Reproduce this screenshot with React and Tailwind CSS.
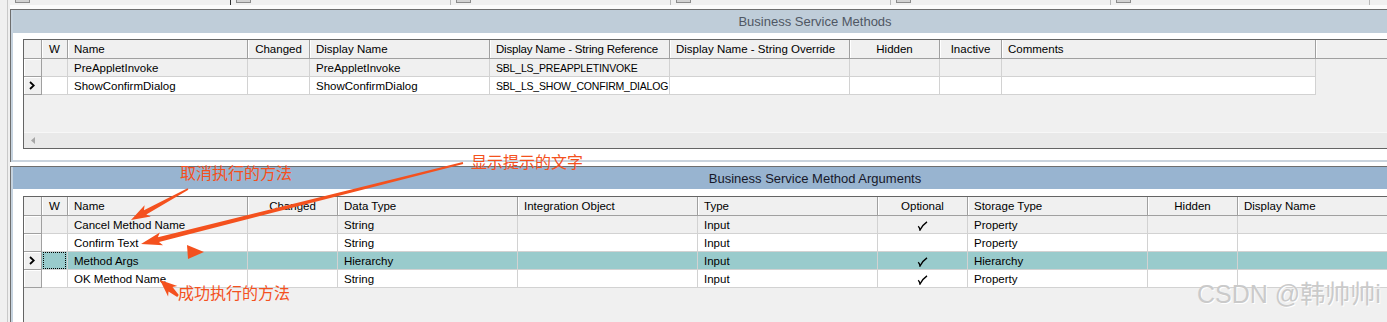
import React from "react"

const methodCols = [
    { label: "W", w: "w-[26px]", center: true },
    { label: "Name", w: "w-[180px]" },
    { label: "Changed", w: "w-[62px]", center: true },
    { label: "Display Name", w: "w-[180px]" },
    { label: "Display Name - String Reference", w: "w-[180px]", tight: true },
    { label: "Display Name - String Override", w: "w-[180px]" },
    { label: "Hidden", w: "w-[90px]", center: true },
    { label: "Inactive", w: "w-[62px]", center: true },
    { label: "Comments", w: "w-[314px]" },
]

const methodRows = [
    ["", "PreAppletInvoke", "", "PreAppletInvoke", "SBL_LS_PREAPPLETINVOKE", "", "", "", ""],
    ["", "ShowConfirmDialog", "", "ShowConfirmDialog", "SBL_LS_SHOW_CONFIRM_DIALOG", "", "", "", ""],
]

const argCols = [
    { label: "W", w: "w-[26px]", center: true },
    { label: "Name", w: "w-[180px]" },
    { label: "Changed", w: "w-[90px]", center: true },
    { label: "Data Type", w: "w-[180px]" },
    { label: "Integration Object", w: "w-[180px]" },
    { label: "Type", w: "w-[180px]" },
    { label: "Optional", w: "w-[90px]", center: true },
    { label: "Storage Type", w: "w-[180px]" },
    { label: "Hidden", w: "w-[90px]", center: true },
    { label: "Display Name", w: "w-[180px]" },
]

const CHECK = "__check__"

const argRows = [
    ["", "Cancel Method Name", "", "String", "", "Input", CHECK, "Property", "", ""],
    ["", "Confirm Text", "", "String", "", "Input", "", "Property", "", ""],
    ["", "Method Args", "", "Hierarchy", "", "Input", CHECK, "Hierarchy", "", ""],
    ["", "OK Method Name", "", "String", "", "Input", CHECK, "Property", "", ""],
]

const Chevron = () => (
    <svg width="6" height="9" viewBox="0 0 6 9">
        <path d="M1 1 L4.8 4.5 L1 8" fill="none" stroke="#000" strokeWidth="1.8" />
    </svg>
)

const Check = () => (
    <svg width="11" height="10" viewBox="0 0 11 10">
        <path d="M1.2 5.2 Q2.6 6.4 3 9 Q5.5 3.8 10 0.8" fill="none" stroke="#000" strokeWidth="1.4" />
    </svg>
)

const HeaderRow = ({ cols }) => (
    <div className="flex h-[19px] shrink-0 bg-[#f0f0f0] border-b border-[#a0a0a0]">
        <div className="w-[18px] shrink-0 border-r border-[#a0a0a0]" />
        {cols.map((c) => (
            <div
                key={c.label}
                className={`${c.w} shrink-0 border-r border-[#a0a0a0] shadow-[inset_1px_0_0_#ffffff] flex items-center px-[6px] pt-[2px] whitespace-nowrap overflow-hidden ${c.center ? "justify-center" : ""} ${c.tight ? "tracking-[-0.2px]" : ""}`}
            >
                {c.label}
            </div>
        ))}
        <div className="flex-1 shadow-[inset_1px_0_0_#ffffff]" />
    </div>
)

const BodyRow = ({ cols, cells, bg, current, focus }) => (
    <div className="flex w-max h-[18px] shrink-0">
        <div className="w-[18px] shrink-0 bg-[#f0f0f0] border-r border-b border-[#a0a0a0] shadow-[inset_1px_1px_0_#ffffff] flex items-center pl-[5px]">
            {current && <Chevron />}
        </div>
        {cols.map((c, i) => (
            <div
                key={c.label}
                className={`${c.w} shrink-0 ${bg} border-r border-b border-[#d2d2d2] flex items-center px-[6px] pt-[2px] whitespace-nowrap overflow-hidden ${c.center ? "justify-center" : ""} ${c.tight ? "text-[10.5px] tracking-[-0.2px]" : ""}`}
            >
                {focus && i === 0 ? (
                    <div className="-mx-[5px] -mt-[2px] w-[25px] h-[17px] border border-dotted border-black" />
                ) : cells[i] === CHECK ? (
                    <Check />
                ) : (
                    cells[i]
                )}
            </div>
        ))}
    </div>
)

const Scrollbar = () => (
    <div className="h-[16px] shrink-0 bg-[#e9e9e9] border-t border-[#f7f7f7] flex items-center pl-[7px]">
        <svg width="4" height="7" viewBox="0 0 4 7">
            <path d="M4 0 L0 3.5 L4 7 Z" fill="#a6a6a6" />
        </svg>
    </div>
)

const TitleBar = ({ title, active }) => (
    <div
        className={`flex shrink-0 overflow-hidden ${active ? "h-[22px] pt-[2px] bg-[#98b4d0] text-[#16182a]" : "h-[23px] bg-[#bfcdd9] text-[#4f5764]"}`}
    >
        <div className="w-[1604px] shrink-0 flex items-center justify-center text-[13px]">{title}</div>
    </div>
)

// tapered arrow like the screenshot tool draws
const arrow = (x1, y1, x2, y2, head = 16, width = 13, neck = 2.5, tail = 0.8) => {
    const dx = x2 - x1
    const dy = y2 - y1
    const len = Math.hypot(dx, dy)
    const ux = dx / len
    const uy = dy / len
    const nx = -uy
    const ny = ux
    const bx = x2 - ux * head
    const by = y2 - uy * head
    const hx = bx - ux * 3
    const hy = by - uy * 3
    const p = [
        [x1 + nx * tail, y1 + ny * tail],
        [bx + nx * neck, by + ny * neck],
        [hx + (nx * width) / 2, hy + (ny * width) / 2],
        [x2, y2],
        [hx - (nx * width) / 2, hy - (ny * width) / 2],
        [bx - nx * neck, by - ny * neck],
        [x1 - nx * tail, y1 - ny * tail],
    ]
    return p.map((q) => q.map((v) => v.toFixed(1)).join(",")).join(" ")
}

const tabs = [221, 221, 220, 221, 220, 259]

const App = () => {
    return (
        <div className="w-[1387px] h-[322px] overflow-hidden relative flex bg-[#f0f0f0] text-[11.5px] text-black font-['Liberation_Sans','Noto_Sans_CJK_SC',sans-serif]">
            {/* left gutter */}
            <div className="w-[10px] shrink-0 flex">
                <div className="ml-[7px] w-px bg-[#c9c9c9]" />
            </div>

            <div className="flex-1 min-w-0 flex flex-col">
                {/* cut-off tab strip */}
                <div className="h-[9px] shrink-0 flex flex-col">
                    <div className="h-[5px] flex">
                        {tabs.map((w, i) => (
                            <div
                                key={i}
                                className={`shrink-0 flex border-r ${i === 0 ? "w-[221px] border-[#303030]" : i === 5 ? "w-[259px] border-[#b8b8b8]" : "w-[220px] border-[#b8b8b8]"}`}
                            >
                                <div className="ml-[5px] w-[15px] h-[3px] bg-[#d2d2d2] border-x border-b border-[#8c8c8c]" />
                            </div>
                        ))}
                    </div>
                    <div className="flex-1 bg-[#fbfbfb]" />
                </div>

                {/* Business Service Methods */}
                <div className="h-[153px] shrink-0 flex border-l border-t border-[#6e6e6e]">
                    <div className="flex-1 min-w-0 flex flex-col border-l-2 border-[#c6d3df] bg-white">
                        <TitleBar title="Business Service Methods" />
                        <div className="flex-1 flex flex-col pl-[10px] pt-[6px]">
                            <div className="h-[110px] shrink-0 flex flex-col bg-[#f0f0f0] border-l border-t border-b border-[#646464]">
                                <HeaderRow cols={methodCols} />
                                <BodyRow cols={methodCols} cells={methodRows[0]} bg="bg-[#f0f0f0]" />
                                <BodyRow cols={methodCols} cells={methodRows[1]} bg="bg-white" current />
                                <div className="flex-1" />
                                <Scrollbar />
                            </div>
                            <div className="flex-1" />
                        </div>
                        <div className="h-[2px] shrink-0 bg-[#c9d3dd]" />
                    </div>
                </div>

                <div className="h-[4px] shrink-0 bg-white" />

                {/* Business Service Method Arguments */}
                <div className="flex-1 min-h-0 flex border-l border-t border-[#6e6e6e]">
                    <div className="flex-1 min-w-0 flex flex-col border-l-2 border-[#c6d3df] bg-white">
                        <TitleBar title="Business Service Method Arguments" active />
                        <div className="flex-1 min-h-0 flex flex-col pl-[10px] pt-[7px]">
                            <div className="flex-1 flex flex-col bg-[#f0f0f0] border-l border-t border-[#646464]">
                                <HeaderRow cols={argCols} />
                                <BodyRow cols={argCols} cells={argRows[0]} bg="bg-[#f0f0f0]" />
                                <BodyRow cols={argCols} cells={argRows[1]} bg="bg-white" />
                                <BodyRow cols={argCols} cells={argRows[2]} bg="bg-[#99cbcc]" current focus />
                                <BodyRow cols={argCols} cells={argRows[3]} bg="bg-white" />
                            </div>
                        </div>
                    </div>
                </div>
            </div>

            {/* annotations drawn on top of the screenshot */}
            <svg className="absolute inset-0 pointer-events-none" width="1387" height="322">
                <g fill="#f4511e">
                    <polygon points={arrow(188, 189, 131, 220, 16, 13, 2.5, 0.8)} />
                    <polygon points={arrow(463, 163, 141, 244, 18, 13, 2.4, 0.9)} />
                    <polygon points="187,245 204,252 188,259" />
                    <polygon points={arrow(178, 296, 160, 280, 14, 14, 3, 1.2)} />
                </g>
            </svg>
            <span className="absolute left-[180px] top-[166px] text-[16px] leading-none text-[#f4511e] whitespace-nowrap">
                取消执行的方法
            </span>
            <span className="absolute left-[471px] top-[155px] text-[16px] leading-none text-[#f4511e] whitespace-nowrap">
                显示提示的文字
            </span>
            <span className="absolute left-[178px] top-[286px] text-[16px] leading-none text-[#f4511e] whitespace-nowrap">
                成功执行的方法
            </span>
            <span className="absolute left-[1197px] top-[282px] text-[25px] leading-none text-[#cacaca] whitespace-nowrap [text-shadow:1px_1px_0_#ffffff]">
                CSDN @韩帅帅i
            </span>
        </div>
    )
}

export default App
